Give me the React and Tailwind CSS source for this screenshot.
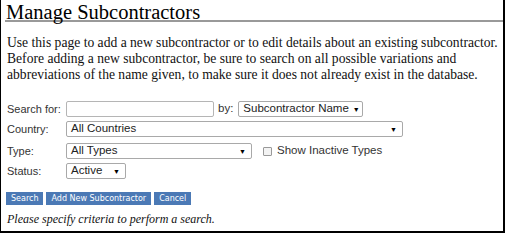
import React from "react";

const sans = { fontFamily: '"Liberation Sans", Arial, sans-serif' };
const serif = { fontFamily: '"Liberation Serif", "Times New Roman", serif' };

function Select({ w, children }) {
  return (
    <div
      className={`flex items-center justify-between h-[16px] border border-[#a9a9a9] rounded-[2px] bg-white pl-[4px] pr-[5px] text-[11.5px] text-[#222] whitespace-nowrap ${w}`}
    >
      <span className="leading-none">{children}</span>
      <span className="text-[7px] leading-none text-black ml-[4px]">▼</span>
    </div>
  );
}

function Row({ label, children, extra = "" }) {
  return (
    <div className={`flex items-center h-[20px] ${extra}`}>
      <div className="w-[59px] text-[11px] text-[#333] leading-none">{label}</div>
      {children}
    </div>
  );
}

function Btn({ children }) {
  return (
    <div
      className="h-[13px] px-[5px] bg-[#4b79b5] text-white text-[8px] leading-[13px] whitespace-nowrap"
      style={{ fontFamily: '"DejaVu Sans", Verdana, sans-serif' }}
    >
      {children}
    </div>
  );
}

export default function App() {
  return (
    <div className="w-[505px] h-[233px] bg-white border-l border-r-2 border-b-2 border-black overflow-hidden">
      <div className="ml-[4px] h-[22px] border-b-2 border-[#999]">
        <div
          className="pl-[1px] pt-[5px] text-[20.5px] leading-[15px] text-black"
          style={serif}
        >
          Manage Subcontractors
        </div>
      </div>
      <div className="pl-[6px] pr-[2px]">
        <div className="mt-[13px] text-[13.6px] leading-[16px] text-[#111] whitespace-nowrap" style={serif}>
          <div>Use this page to add a new subcontractor or to edit details about an existing subcontractor.</div>
          <div>Before adding a new subcontractor, be sure to search on all possible variations and</div>
          <div>abbreviations of the name given, to make sure it does not already exist in the database.</div>
        </div>
        <div className="mt-[16px]" style={sans}>
          <Row label="Search for:">
            <div className="w-[148px] h-[16px] border border-[#b5b5b5] rounded-[2px] bg-white" />
            <span className="ml-[4px] mr-[5px] text-[11.5px] text-[#333] leading-none">by:</span>
            <Select w="w-[125px]">Subcontractor Name</Select>
          </Row>
          <Row label="Country:">
            <Select w="w-[337px]">All Countries</Select>
          </Row>
          <Row label="Type:" extra="mt-[2px]">
            <Select w="w-[186px]">All Types</Select>
            <div className="ml-[11px] w-[9px] h-[9px] border border-[#999] rounded-[1px] bg-[#f3f3f3]" />
            <span className="ml-[5px] text-[11.5px] text-[#333] leading-none">Show Inactive Types</span>
          </Row>
          <Row label="Status:">
            <Select w="w-[60px]">Active</Select>
          </Row>
        </div>
        <div className="mt-[11px] ml-[-1px] flex gap-[3px]">
          <Btn>Search</Btn>
          <Btn>Add New Subcontractor</Btn>
          <Btn>Cancel</Btn>
        </div>
        <p className="mt-[6px] text-[12px] leading-[16px] italic text-[#111] whitespace-nowrap" style={serif}>
          Please specify criteria to perform a search.
        </p>
      </div>
    </div>
  );
}
